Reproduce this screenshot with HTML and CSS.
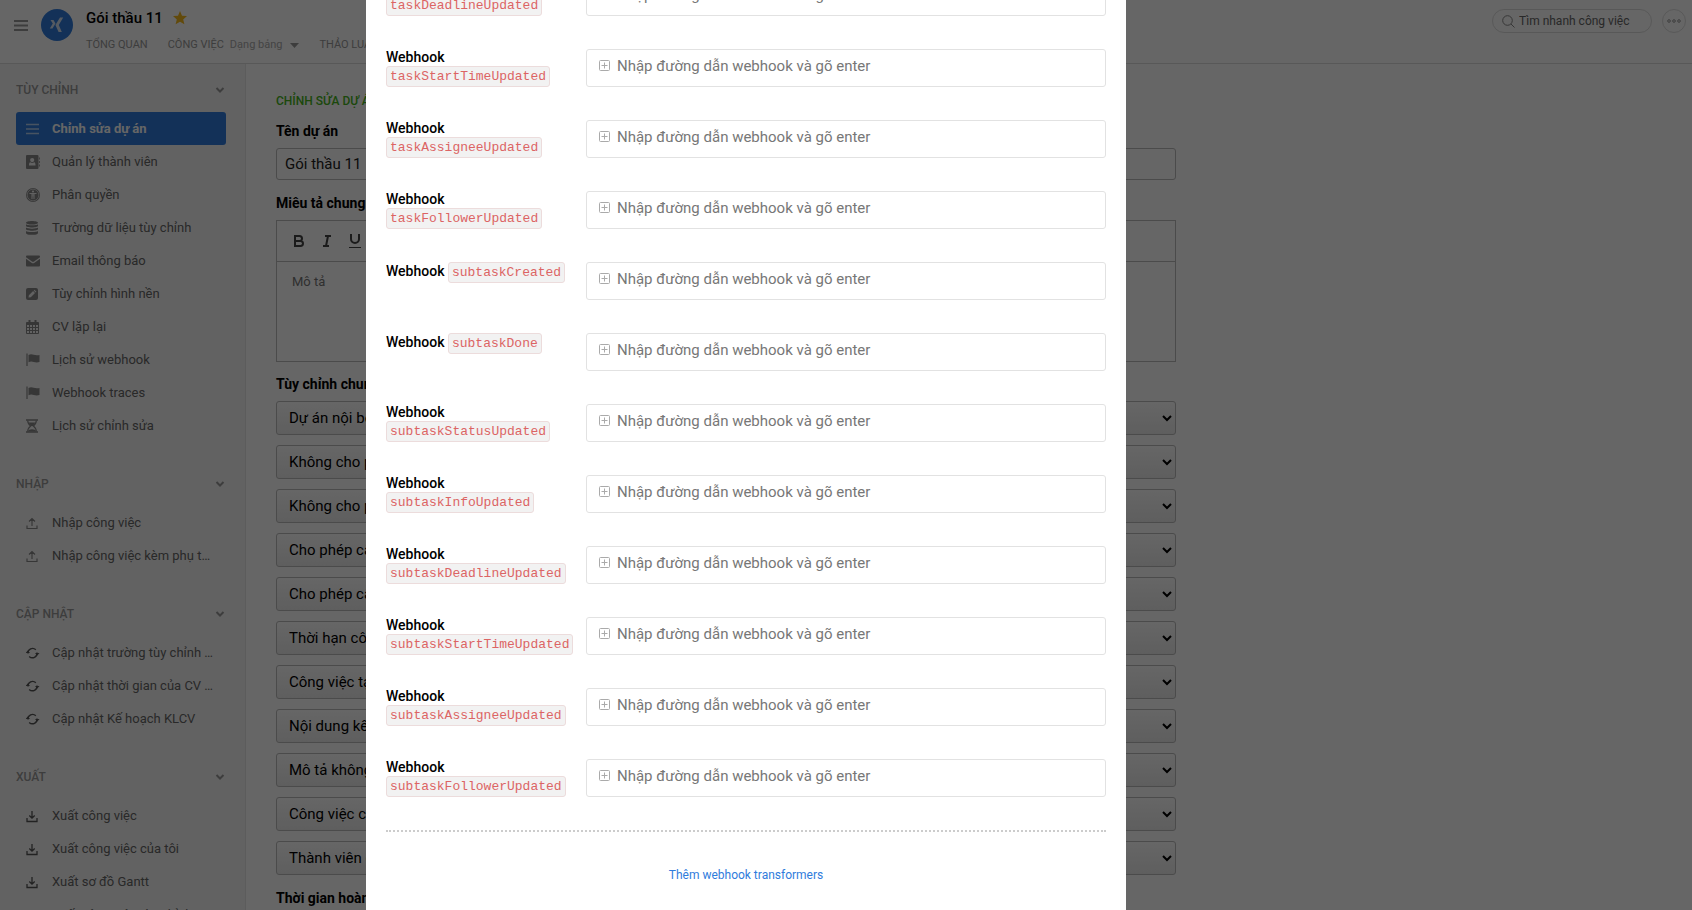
FILE: index.html
```html
<!DOCTYPE html>
<html lang="vi">
<head>
<meta charset="utf-8">
<title>Gói thầu 11</title>
<link rel="stylesheet" href="styles.css">
</head>
<body>
<svg class="sprite" aria-hidden="true">
  <symbol id="chevron" viewBox="0 0 10 8"><path d="M1.500 2l3.500 3.500L8.500 2" fill="none" stroke="currentColor" stroke-width="2"/></symbol>
  <symbol id="bars" viewBox="0 0 14 14"><path d="M0 2.500h13M0 7h13M0 11.500h13" stroke="currentColor" stroke-width="1.300"/></symbol>
  <symbol id="book" viewBox="0 0 14 14"><path fill="currentColor" fill-rule="evenodd" d="M1 0h10.500a1 1 0 0 1 1 1v12a1 1 0 0 1-1 1H1a1 1 0 0 1-1-1V1a1 1 0 0 1 1-1zM6.200 3a2 2 0 1 0 0 4.200A2 2 0 0 0 6.200 3zM4.300 7.200C3.300 7.500 3 8.500 3 10.500h6.500c0-2-.3-3-1.300-3.300-1 1-2.900 1-3.900 0zM13 2.500h.8v2H13zM13 6h.8v2H13zM13 9.500h.8v2H13z"/></symbol>
  <symbol id="access" viewBox="0 0 14 14"><circle cx="7" cy="7" r="7" fill="currentColor"/><circle cx="7" cy="7" r="5.800" fill="none" stroke="#f3f3f3" stroke-width=".6"/><circle cx="7" cy="3.500" r="1.100" fill="#f3f3f3"/><path d="M3.500 5.500h7M7 5.500v3M6 5.500v5.500M8 5.500v5.500" stroke="#f3f3f3" stroke-width="1"/></symbol>
  <symbol id="database" viewBox="0 0 14 14"><path fill="currentColor" d="M6 0c3.300 0 6 .8 6 1.800S9.300 3.600 6 3.600 0 2.800 0 1.800 2.700 0 6 0zM0 3.300c1 1.400 11 1.400 12 0v1.500c0 2.300-12 2.300-12 0zM0 6.600c1 1.400 11 1.400 12 0v1.500c0 2.300-12 2.300-12 0zM0 9.900c1 1.400 11 1.400 12 0v2c0 2.600-12 2.600-12 0z"/></symbol>
  <symbol id="mail" viewBox="0 0 14 14"><path fill="currentColor" d="M1 1.500h12a1 1 0 0 1 1 1v.8L8 7.600c-.7.500-1.300.5-2 0L0 3.300v-.8a1 1 0 0 1 1-1zM0 4.800l5.500 4c1 .7 2 .7 3 0l5.500-4v6.700a1 1 0 0 1-1 1H1a1 1 0 0 1-1-1z"/></symbol>
  <symbol id="pen" viewBox="0 0 14 14"><rect y="1" width="12" height="12" rx="2" fill="currentColor"/><path d="M2.500 10.600l.4-2.300 4.200-4.200 1.900 1.900-4.200 4.200zM7.700 3.500l.8-.7 1.900 1.900-.8.700z" fill="#f3f3f3"/></symbol>
  <symbol id="calendar" viewBox="0 0 14 14"><path d="M.5 2.500h12v11H.5zM.5 4.500h12M3.500 5v8.500M6.500 5v8.500M9.500 5v8.500M.5 7.500h12M.5 10.500h12" fill="none" stroke="currentColor"/><path d="M.5 2.500h12v2H.5zM2.500 0h2v3.500h-2zM8.500 0h2v3.500h-2z" fill="currentColor"/></symbol>
  <symbol id="flag" viewBox="0 0 14 14"><path d="M1 .5v12.500" stroke="currentColor" stroke-width="1.200"/><path d="M2.500 2c4-2 5.500 1.300 11 0v7c-5.500 1.500-7-2-11 .2z" fill="currentColor"/></symbol>
  <symbol id="hourglass" viewBox="0 0 14 14"><path d="M0 1h12M0 13h12" stroke="currentColor" stroke-width="1.600"/><path d="M1.700 1.500c0 3 1 4 3 5.500-2 1.500-3 2.500-3 5.500M10.300 1.500c0 3-1 4-3 5.500 2 1.500 3 2.500 3 5.500" fill="none" stroke="currentColor" stroke-width="1.200"/><path d="M2.500 3.500h7L7 7h-2zM2 12.500c0-3 8-3 8 0z" fill="currentColor"/></symbol>
  <symbol id="upload" viewBox="0 0 14 14"><path d="M6 10V3M3 5.500l3-3 3 3M1 9.500v3h10v-3" fill="none" stroke="currentColor" stroke-width="1.200"/></symbol>
  <symbol id="download" viewBox="0 0 14 14"><path d="M6 2v7M3.300 6.500L6 9.200l2.700-2.700M1 9v3.500h10V9" fill="none" stroke="currentColor" stroke-width="1.300"/></symbol>
  <symbol id="sync" viewBox="0 0 14 14"><path d="M2 7.500A4.600 4.600 0 0 1 9.800 3.800M3.200 10.400A4.600 4.600 0 0 0 11 6.500" fill="none" stroke="currentColor" stroke-width="1.400"/><path d="M-.5 7H4L1.700 4.400zM9 7h4.500L11.200 9.600z" transform="rotate(180 6.500 7)" fill="currentColor"/></symbol>
  <symbol id="plus" viewBox="0 0 12 12"><rect x=".5" y=".5" width="10" height="10" rx="1" fill="none" stroke="currentColor"/><path d="M5.500 2.500v6M2.500 5.500h6" stroke="currentColor"/></symbol>
</svg>

<div class="app">
  <header class="topbar">
    <button class="menu" aria-label="Menu"><svg width="14" height="12" viewBox="0 0 14 12"><path d="M0 2h14M0 6.500h14M0 11h14" stroke="currentColor" stroke-width="2"/></svg></button>
    <svg class="avatar" width="32" height="32" viewBox="0 0 32 32"><circle cx="16" cy="16" r="16" fill="#307cdc"/><path d="M9.500 11h3l2 3.500-3 5H8.800l3-5zM19 8.500h3.200L17.800 16l3 7h-3.200l-3.200-7z" fill="#d4e2f3"/></svg>
    <div class="heading">
      <h1 class="title">Gói thầu 11
        <svg width="14" height="14" viewBox="0 0 14 14"><path d="M7 0l2 4.700 5 .4-3.800 3.300 1.200 4.900L7 10.700l-4.400 2.600 1.200-4.900L0 5.100l5-.4z" fill="#f5b81c"/></svg>
      </h1>
      <nav class="tabs">
        <a href="#">TỔNG QUAN</a>
        <a href="#">CÔNG VIỆC <span class="view">Dạng bảng</span><svg width="9" height="5" viewBox="0 0 9 5"><path d="M0 0h9L4.500 5z" fill="currentColor"/></svg></a>
        <a href="#">THẢO LUẬN</a>
      </nav>
    </div>
    <div class="tools">
      <label class="search"><svg width="13" height="13" viewBox="0 0 13 13"><circle cx="5.500" cy="5.500" r="4.800" fill="none" stroke="currentColor"/><path d="M9 9l3.500 3.500" stroke="currentColor"/></svg><input type="text" placeholder="Tìm nhanh công việc" aria-label="Tìm nhanh công việc"></label>
      <button class="more" aria-label="Thêm"><svg width="14" height="4" viewBox="0 0 14 4"><g fill="none" stroke="currentColor"><circle cx="2" cy="2" r="1.300"/><circle cx="7" cy="2" r="1.300"/><circle cx="12" cy="2" r="1.300"/></g></svg></button>
    </div>
  </header>
  <div class="body">
    <aside class="sidebar">
      <section class="group">
        <h2 class="group-title">TÙY CHỈNH<svg class="chev"><use href="#chevron"/></svg></h2>
        <a class="item active" href="#"><svg class="ico"><use href="#bars"/></svg><span>Chỉnh sửa dự án</span></a>
        <a class="item" href="#"><svg class="ico"><use href="#book"/></svg><span>Quản lý thành viên</span></a>
        <a class="item" href="#"><svg class="ico"><use href="#access"/></svg><span>Phân quyền</span></a>
        <a class="item" href="#"><svg class="ico"><use href="#database"/></svg><span>Trường dữ liệu tùy chỉnh</span></a>
        <a class="item" href="#"><svg class="ico"><use href="#mail"/></svg><span>Email thông báo</span></a>
        <a class="item" href="#"><svg class="ico"><use href="#pen"/></svg><span>Tùy chỉnh hình nền</span></a>
        <a class="item" href="#"><svg class="ico"><use href="#calendar"/></svg><span>CV lặp lại</span></a>
        <a class="item" href="#"><svg class="ico"><use href="#flag"/></svg><span>Lịch sử webhook</span></a>
        <a class="item" href="#"><svg class="ico"><use href="#flag"/></svg><span>Webhook traces</span></a>
        <a class="item" href="#"><svg class="ico"><use href="#hourglass"/></svg><span>Lịch sử chỉnh sửa</span></a>
      </section>
      <section class="group">
        <h2 class="group-title">NHẬP<svg class="chev"><use href="#chevron"/></svg></h2>
        <a class="item" href="#"><svg class="ico"><use href="#upload"/></svg><span>Nhập công việc</span></a>
        <a class="item" href="#"><svg class="ico"><use href="#upload"/></svg><span>Nhập công việc kèm phụ t…</span></a>
      </section>
      <section class="group">
        <h2 class="group-title">CẬP NHẬT<svg class="chev"><use href="#chevron"/></svg></h2>
        <a class="item dark" href="#"><svg class="ico"><use href="#sync"/></svg><span>Cập nhật trường tùy chỉnh …</span></a>
        <a class="item dark" href="#"><svg class="ico"><use href="#sync"/></svg><span>Cập nhật thời gian của CV …</span></a>
        <a class="item dark" href="#"><svg class="ico"><use href="#sync"/></svg><span>Cập nhật Kế hoạch KLCV</span></a>
      </section>
      <section class="group">
        <h2 class="group-title">XUẤT<svg class="chev"><use href="#chevron"/></svg></h2>
        <a class="item dark" href="#"><svg class="ico"><use href="#download"/></svg><span>Xuất công việc</span></a>
        <a class="item dark" href="#"><svg class="ico"><use href="#download"/></svg><span>Xuất công việc của tôi</span></a>
        <a class="item dark" href="#"><svg class="ico"><use href="#download"/></svg><span>Xuất sơ đồ Gantt</span></a>
        <a class="item dark" href="#"><svg class="ico"><use href="#download"/></svg><span>Xuất công việc tùy chỉnh</span></a>
      </section>
    </aside>
    <main class="content">
      <form class="form">
        <h2 class="form-title">CHỈNH SỬA DỰ ÁN</h2>
        <label class="label" for="name">Tên dự án</label>
        <input class="text" id="name" type="text" value="Gói thầu 11">
        <label class="label" for="desc">Miêu tả chung</label>
        <div class="editor">
          <div class="toolbar">
            <button type="button" aria-label="Đậm"><svg width="18" height="18" viewBox="0 0 18 18"><path d="M5 4h4.500a2.500 2.500 0 0 1 0 5H5zM5 9h5.500a2.500 2.500 0 0 1 0 5H5z" fill="none" stroke="currentColor" stroke-width="2"/></svg></button>
            <button type="button" aria-label="Nghiêng"><svg width="18" height="18" viewBox="0 0 18 18"><path d="M7 4h6M5 14h6M10 4L8 14" fill="none" stroke="currentColor" stroke-width="2"/></svg></button>
            <button type="button" aria-label="Gạch chân"><svg width="18" height="18" viewBox="0 0 18 18"><path d="M5 2v5a4 4 0 0 0 8 0V2" fill="none" stroke="currentColor" stroke-width="2"/><path d="M3 15.500h12" stroke="currentColor"/></svg></button>
          </div>
          <textarea id="desc" placeholder="Mô tả"></textarea>
        </div>
        <label class="label" for="s1">Tùy chỉnh chung</label>
        <div class="selects">
          <select id="s1"><option>Dự án nội bộ</option></select>
          <select aria-label="Phép 1"><option>Không cho phép thành viên</option></select>
          <select aria-label="Phép 2"><option>Không cho phép thành viên</option></select>
          <select aria-label="Phép 3"><option>Cho phép cập nhật</option></select>
          <select aria-label="Phép 4"><option>Cho phép cập nhật</option></select>
          <select aria-label="Thời hạn"><option>Thời hạn công việc</option></select>
          <select aria-label="Công việc"><option>Công việc tạo mới</option></select>
          <select aria-label="Nội dung"><option>Nội dung kết quả</option></select>
          <select aria-label="Mô tả"><option>Mô tả không bắt buộc</option></select>
          <select aria-label="Công việc con"><option>Công việc con</option></select>
          <select aria-label="Thành viên"><option>Thành viên dự án</option></select>
        </div>
        <label class="label" for="done">Thời gian hoàn thành</label>
        <input class="text" id="done" type="text">
      </form>
    </main>
  </div>
</div>

<div class="overlay">
  <div class="modal" role="dialog" aria-label="Webhook">
    <div class="rows">
      <div class="row"><label for="w0">Webhook <code>taskDeadlineUpdated</code></label><div class="field"><svg><use href="#plus"/></svg><input id="w0" type="text" placeholder="Nhập đường dẫn webhook và gõ enter"></div></div>
      <div class="row"><label for="w1">Webhook <code>taskStartTimeUpdated</code></label><div class="field"><svg><use href="#plus"/></svg><input id="w1" type="text" placeholder="Nhập đường dẫn webhook và gõ enter"></div></div>
      <div class="row"><label for="w2">Webhook <code>taskAssigneeUpdated</code></label><div class="field"><svg><use href="#plus"/></svg><input id="w2" type="text" placeholder="Nhập đường dẫn webhook và gõ enter"></div></div>
      <div class="row"><label for="w3">Webhook <code>taskFollowerUpdated</code></label><div class="field"><svg><use href="#plus"/></svg><input id="w3" type="text" placeholder="Nhập đường dẫn webhook và gõ enter"></div></div>
      <div class="row"><label for="w4">Webhook <code>subtaskCreated</code></label><div class="field"><svg><use href="#plus"/></svg><input id="w4" type="text" placeholder="Nhập đường dẫn webhook và gõ enter"></div></div>
      <div class="row"><label for="w5">Webhook <code>subtaskDone</code></label><div class="field"><svg><use href="#plus"/></svg><input id="w5" type="text" placeholder="Nhập đường dẫn webhook và gõ enter"></div></div>
      <div class="row"><label for="w6">Webhook <code>subtaskStatusUpdated</code></label><div class="field"><svg><use href="#plus"/></svg><input id="w6" type="text" placeholder="Nhập đường dẫn webhook và gõ enter"></div></div>
      <div class="row"><label for="w7">Webhook <code>subtaskInfoUpdated</code></label><div class="field"><svg><use href="#plus"/></svg><input id="w7" type="text" placeholder="Nhập đường dẫn webhook và gõ enter"></div></div>
      <div class="row"><label for="w8">Webhook <code>subtaskDeadlineUpdated</code></label><div class="field"><svg><use href="#plus"/></svg><input id="w8" type="text" placeholder="Nhập đường dẫn webhook và gõ enter"></div></div>
      <div class="row"><label for="w9">Webhook <code>subtaskStartTimeUpdated</code></label><div class="field"><svg><use href="#plus"/></svg><input id="w9" type="text" placeholder="Nhập đường dẫn webhook và gõ enter"></div></div>
      <div class="row"><label for="w10">Webhook <code>subtaskAssigneeUpdated</code></label><div class="field"><svg><use href="#plus"/></svg><input id="w10" type="text" placeholder="Nhập đường dẫn webhook và gõ enter"></div></div>
      <div class="row"><label for="w11">Webhook <code>subtaskFollowerUpdated</code></label><div class="field"><svg><use href="#plus"/></svg><input id="w11" type="text" placeholder="Nhập đường dẫn webhook và gõ enter"></div></div>
    </div>
    <div class="foot"><a href="#">Thêm webhook transformers</a></div>
  </div>
</div>
</body>
</html>
```
FILE: styles.css
```css
* { box-sizing: border-box; }
body { margin: 0; font: 14px/20px Roboto, "Liberation Sans", sans-serif; color: #111; background: #fff; }
h1, h2 { margin: 0; font-weight: 500; }
a { text-decoration: none; color: inherit; }
button, input, select, textarea { font: inherit; color: inherit; }
button { border: 0; background: none; padding: 0; display: flex; align-items: center; justify-content: center; }
svg { flex: none; }
.sprite { position: absolute; width: 0; height: 0; }

.app { height: 100vh; display: flex; flex-direction: column; overflow: hidden; }
.topbar { display: flex; align-items: flex-start; height: 64px; flex: none; padding: 9px 6px 0 14px; border-bottom: 1px solid #ddd; color: #999; }
.menu { height: 32px; color: #999; }
.avatar { margin: 0 13px; }
.title { display: flex; align-items: center; gap: 10px; font-size: 15px; line-height: 18px; color: #000; }
.tabs { display: flex; gap: 20px; margin-top: 8px; font-size: 11px; }
.tabs a { display: flex; align-items: center; color: #999; }
.view { margin: 0 8px 0 6px; color: #aaa; }
.tools { display: flex; gap: 10px; margin-left: auto; }
.search { display: flex; align-items: center; gap: 4px; width: 160px; height: 24px; padding: 0 9px; border: 1px solid #ddd; border-radius: 12px; color: #888; }
.search input { flex: 1; min-width: 0; border: 0; padding: 0; background: none; font-size: 12px; }
.search input::placeholder { color: #666; }
.more { width: 24px; height: 24px; border: 1px solid #ddd; border-radius: 50%; color: #999; }

.body { display: flex; flex: 1; min-height: 0; }
.sidebar { width: 246px; flex: none; overflow: hidden; padding: 4px 19px 0 16px; background: #f6f6f6; border-right: 1px solid #e6e6e6; }
.group { margin-bottom: 20px; }
.group-title { display: flex; align-items: center; justify-content: space-between; height: 44px; padding-right: 1px; font-size: 12px; color: #999; }
.chev { width: 10px; height: 8px; color: #999; }
.item { display: flex; align-items: center; gap: 12px; height: 33px; padding: 0 10px; border-radius: 3px; font-size: 13px; color: #666; }
.item span { white-space: nowrap; }
.ico { width: 14px; height: 14px; color: #888; }
.item.dark .ico { color: #555; }
.item.active { background: #307cdc; color: #fff; font-weight: 700; }
.item.active .ico { color: #b5cff2; }

.content { flex: 1; min-width: 0; padding: 26px 30px 0; overflow: hidden; }
.form { max-width: 900px; }
.form-title { font-size: 12px; line-height: 22px; color: #46b41c; }
.label { display: block; padding: 9px 0 7px; font-weight: 700; color: #000; }
.text { display: block; width: 100%; height: 32px; margin-bottom: 4px; padding: 0 8px; border: 1px solid #bbb; border-radius: 3px; background: transparent; font-size: 15px; color: #222; }
.editor { border: 1px solid #bbb; margin-bottom: 3px; }
.toolbar { display: flex; gap: 10px; height: 41px; padding: 0 13px; border-bottom: 1px solid #bbb; color: #444; }
.toolbar button { width: 18px; height: 40px; }
.editor textarea { display: block; width: 100%; height: 99px; border: 0; padding: 10px 15px; resize: none; background: transparent; font-size: 13px; }
.editor textarea::placeholder { color: #777; }
.selects { display: flex; flex-direction: column; gap: 10px; margin-bottom: 4px; }
.selects select { height: 34px; padding: 0 8px; border: 1px solid #bbb; border-radius: 3px; background: linear-gradient(#fff, #ececec); font-size: 15px; color: #000; }

.overlay { position: fixed; inset: 0; display: flex; flex-direction: column; justify-content: flex-end; align-items: center; padding-right: 200px; overflow: hidden; background: rgba(0, 0, 0, 0.6); }
.modal { width: 760px; max-width: 100%; flex: none; padding: 20px 20px 25px; background: #fff; }
.rows { display: flex; flex-direction: column; gap: 33px; padding-bottom: 33px; border-bottom: 2px dotted #ccc; }
.row { display: grid; grid-template: 38px / 190px 1fr; column-gap: 10px; }
.row label { font-weight: 500; line-height: 17px; color: #000; }
.row code { display: inline-block; padding: 0 3px; border: 1px solid #ecdcdc; border-radius: 3px; background: #f2f2f2; font: 13px/19px "Liberation Mono", monospace; color: #dc6464; }
.field { display: flex; align-items: center; gap: 6px; padding: 0 12px 4px; border: 1px solid #e2e2e2; border-radius: 3px; color: #aaa; }
.field svg { width: 12px; height: 12px; }
.field input { flex: 1; min-width: 0; border: 0; padding: 0; background: none; font-size: 15px; }
.field input::placeholder { color: #777; }
.foot { padding-top: 33px; text-align: center; font-size: 12px; color: #307cdc; }
```
